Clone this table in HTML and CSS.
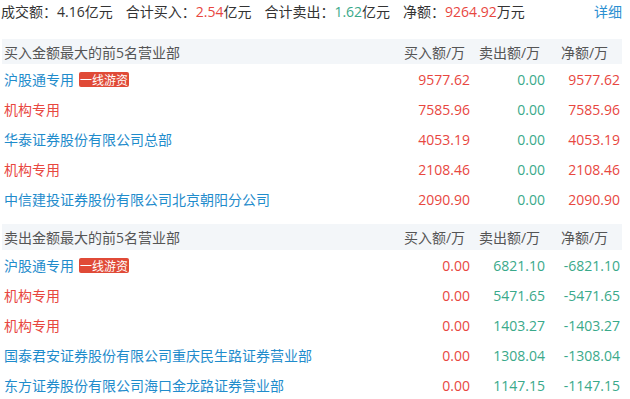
FILE: index.html
```html
<!DOCTYPE html>
<html>
<head>
<meta charset="utf-8">
<link rel="stylesheet" href="styles.css">
</head>
<body>
<div class="wrap">
  <div class="summary">
    <div class="stats">
      <span class="stat">成交额：4.16亿元</span>
      <span class="stat">合计买入：<em class="up">2.54</em>亿元</span>
      <span class="stat">合计卖出：<em class="down">1.62</em>亿元</span>
      <span class="stat">净额：<em class="up">9264.92</em>万元</span>
    </div>
    <a class="detail">详细</a>
  </div>

  <div class="grid head">
    <div class="name">买入金额最大的前5名营业部</div>
    <div class="col">买入额/万</div>
    <div class="col">卖出额/万</div>
    <div class="col">净额/万</div>
  </div>
  <div class="grid row"><div class="name blue">沪股通专用<span class="badge">一线游资</span></div><div class="num up">9577.62</div><div class="num down">0.00</div><div class="num up">9577.62</div></div>
  <div class="grid row"><div class="name red">机构专用</div><div class="num up">7585.96</div><div class="num down">0.00</div><div class="num up">7585.96</div></div>
  <div class="grid row"><div class="name blue">华泰证券股份有限公司总部</div><div class="num up">4053.19</div><div class="num down">0.00</div><div class="num up">4053.19</div></div>
  <div class="grid row"><div class="name red">机构专用</div><div class="num up">2108.46</div><div class="num down">0.00</div><div class="num up">2108.46</div></div>
  <div class="grid row"><div class="name blue">中信建投证券股份有限公司北京朝阳分公司</div><div class="num up">2090.90</div><div class="num down">0.00</div><div class="num up">2090.90</div></div>

  <div class="grid head second">
    <div class="name">卖出金额最大的前5名营业部</div>
    <div class="col">买入额/万</div>
    <div class="col">卖出额/万</div>
    <div class="col">净额/万</div>
  </div>
  <div class="grid row"><div class="name blue">沪股通专用<span class="badge">一线游资</span></div><div class="num up">0.00</div><div class="num down">6821.10</div><div class="num down">-6821.10</div></div>
  <div class="grid row"><div class="name red">机构专用</div><div class="num up">0.00</div><div class="num down">5471.65</div><div class="num down">-5471.65</div></div>
  <div class="grid row"><div class="name red">机构专用</div><div class="num up">0.00</div><div class="num down">1403.27</div><div class="num down">-1403.27</div></div>
  <div class="grid row"><div class="name blue">国泰君安证券股份有限公司重庆民生路证券营业部</div><div class="num up">0.00</div><div class="num down">1308.04</div><div class="num down">-1308.04</div></div>
  <div class="grid row"><div class="name blue">东方证券股份有限公司海口金龙路证券营业部</div><div class="num up">0.00</div><div class="num down">1147.15</div><div class="num down">-1147.15</div></div>
</div>
</body>
</html>
```

FILE: styles.css
```css
html, body {
  margin: 0;
  padding: 0;
  background: #fff;
}
body {
  font-family: "Open Sans", "Noto Sans CJK SC", sans-serif;
  font-size: 14px;
  color: #333;
}
.wrap {
  width: 620px;
  margin-left: 2px;
}
.summary {
  display: flex;
  justify-content: space-between;
  align-items: center;
  height: 24px;
  line-height: 24px;
  margin-bottom: 15px;
  margin-left: -1px;
}
.stats {
  display: flex;
  gap: 13px;
}
.stat em {
  font-style: normal;
}
.detail {
  color: #2b8fd1;
  cursor: pointer;
}
.up { color: #e8473f; }
.down { color: #3aa98a; }
.blue { color: #1f8ccc; }
.red { color: #e8473f; }
.grid {
  display: grid;
  grid-template-columns: 1fr 75px 75px 75px;
  align-items: center;
}
.head {
  background: #f3f6f9;
  height: 25px;
  color: #555;
}
.head.second {
  margin-top: 10px;
  height: 26px;
}
.head .col {
  text-align: center;
}
.name {
  padding-left: 2px;
  white-space: nowrap;
  display: flex;
  align-items: center;
}
.row {
  height: 30px;
}
.num {
  text-align: right;
  padding-right: 2px;
}
.badge {
  display: inline-block;
  margin-left: 5px;
  background: #e04a37;
  color: #fff;
  font-family: "Noto Sans CJK SC", sans-serif;
  font-size: 12px;
  line-height: 15px;
  height: 15px;
  padding: 0 1px;
  border-radius: 2px;
}
```
